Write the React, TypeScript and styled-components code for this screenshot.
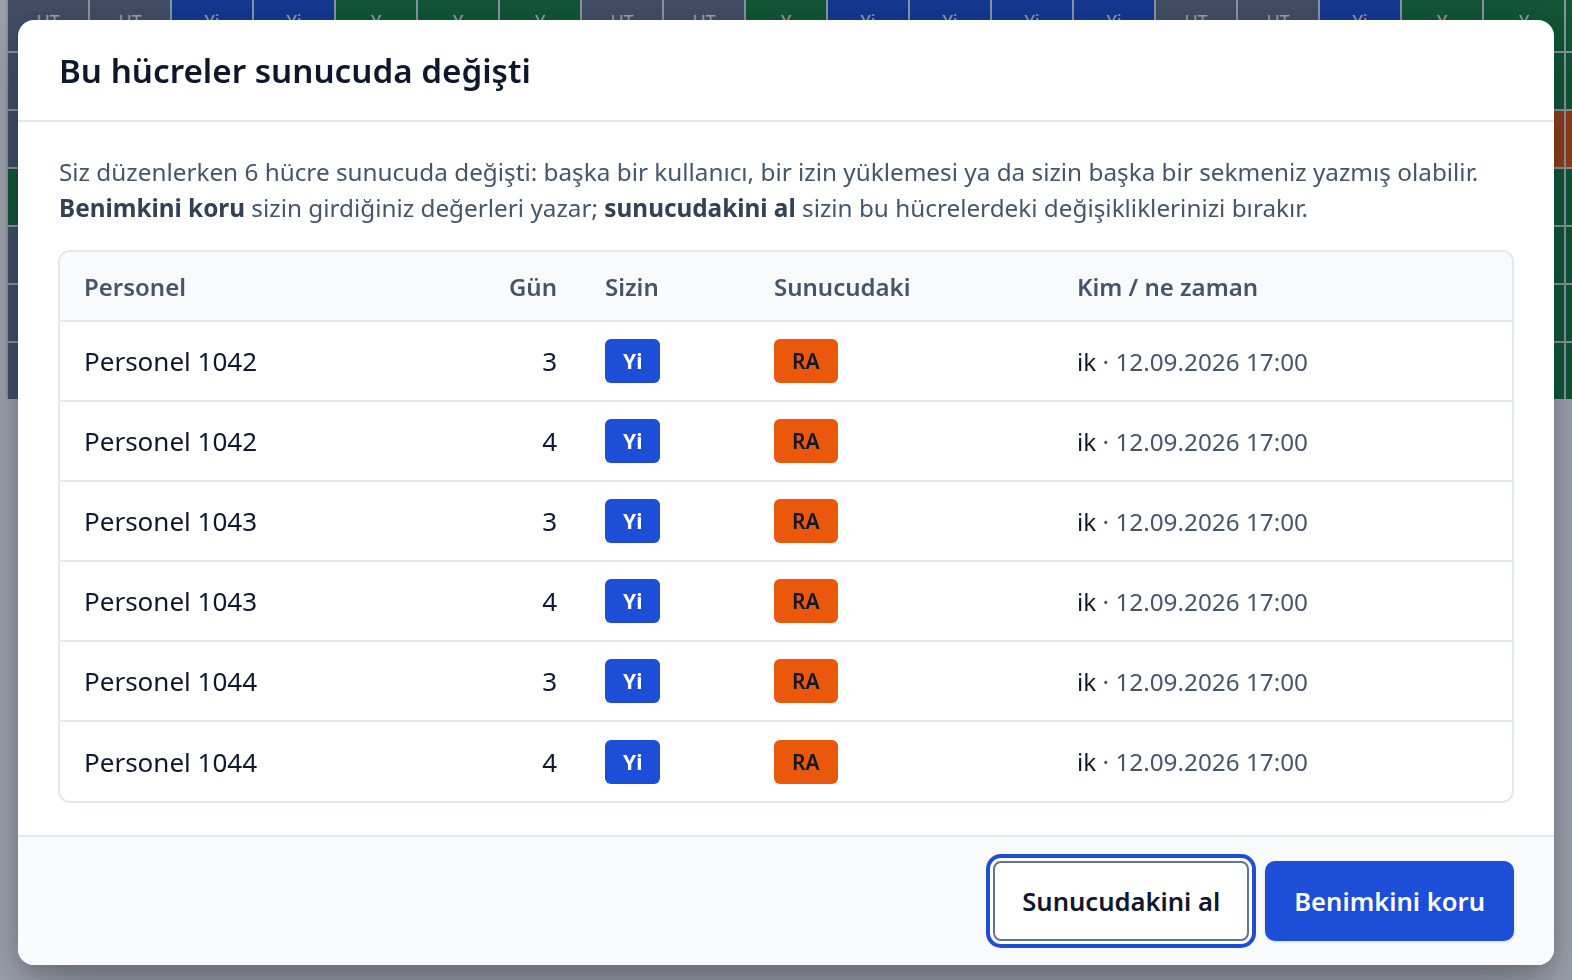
import React from 'react';
import styled, { createGlobalStyle } from 'styled-components';

const GlobalStyle = createGlobalStyle`
  html, body {
    margin: 0;
    padding: 0;
    background: #ffffff;
    overflow: hidden;
  }

  body {
    font-family: "Noto Sans", "Liberation Sans", sans-serif;
    color: #0f172a;
  }

  * {
    box-sizing: border-box;
  }
`;

/* ---------- background schedule grid ---------- */

type Code = 'UT' | 'Yi' | 'Y' | 'RA';

const cellColors: Record<Code, string> = {
  UT: '#64748b',
  Yi: '#1d4ed8',
  Y: '#15803d',
  RA: '#ea580c',
};

const ScheduleGrid = styled.div`
  display: grid;
  grid-template-columns: repeat(20, 80px);
  grid-template-rows: 51px repeat(6, 56px);
  gap: 2px;
  margin-left: 6px;
  padding-left: 2px;
  background: #e2e8f0;
  width: max-content;
`;

const ScheduleCell = styled.div<{ $code: Code; $top?: boolean }>`
  background: ${p => cellColors[p.$code]};
  color: #ffffff;
  font-size: 18px;
  display: flex;
  justify-content: center;
  align-items: ${p => (p.$top ? 'flex-start' : 'center')};
  padding-top: ${p => (p.$top ? '9px' : '0')};
`;

const firstRow: Code[] = [
  'UT', 'UT', 'Yi', 'Yi', 'Y', 'Y', 'Y', 'UT', 'UT', 'Y',
  'Yi', 'Yi', 'Yi', 'Yi', 'UT', 'UT', 'Yi', 'Y', 'Y', 'Y',
];

const otherRows: Code[][] = [
  ['UT', 'Yi', 'Yi', 'Y', 'Y', 'UT', 'UT', 'Yi', 'Yi', 'Y', 'Y', 'Y', 'UT', 'UT', 'Yi', 'Yi', 'Y', 'Y', 'Y', 'Y'],
  ['UT', 'UT', 'Y', 'Y', 'Yi', 'Yi', 'UT', 'UT', 'Y', 'Y', 'Yi', 'Yi', 'UT', 'Y', 'Y', 'Yi', 'Yi', 'UT', 'RA', 'RA'],
  ['Y', 'Y', 'UT', 'UT', 'Yi', 'Yi', 'Y', 'Y', 'UT', 'Yi', 'Yi', 'Y', 'Y', 'UT', 'UT', 'Yi', 'Y', 'Y', 'Y', 'Y'],
  ['UT', 'Yi', 'Yi', 'Y', 'Y', 'UT', 'UT', 'Yi', 'Y', 'Y', 'UT', 'UT', 'Yi', 'Yi', 'Y', 'Y', 'UT', 'Yi', 'Y', 'Y'],
  ['UT', 'UT', 'Yi', 'Yi', 'Y', 'Y', 'UT', 'Y', 'Yi', 'Yi', 'UT', 'Y', 'Y', 'Yi', 'UT', 'UT', 'Y', 'Yi', 'Y', 'Y'],
  ['UT', 'Y', 'Y', 'UT', 'UT', 'Yi', 'Yi', 'Y', 'Y', 'UT', 'Yi', 'Yi', 'Y', 'UT', 'Y', 'Yi', 'Yi', 'UT', 'Y', 'Y'],
];

/* ---------- modal ---------- */

const Overlay = styled.div`
  position: fixed;
  inset: 0;
  background: rgba(15, 23, 42, 0.42);
  display: flex;
  align-items: flex-start;
  justify-content: center;
  padding: 20px 18px;
`;

const Dialog = styled.div`
  width: 100%;
  background: #ffffff;
  border-radius: 16px;
  overflow: hidden;
  box-shadow: 0 25px 50px -12px rgba(15, 23, 42, 0.35), 0 8px 20px rgba(15, 23, 42, 0.15);
  display: flex;
  flex-direction: column;
`;

const Header = styled.header`
  height: 102px;
  padding: 0 41px;
  display: flex;
  align-items: center;
  border-bottom: 2px solid #e2e8f0;
`;

const Title = styled.h2`
  margin: 0;
  font-size: 33.2px;
  font-weight: 600;
  color: #0f172a;
`;

const Body = styled.div`
  padding: 32px 40px;
  display: flex;
  flex-direction: column;
  gap: 24px;
`;

const Description = styled.p`
  margin: 0 1px;
  font-size: 24.3px;
  line-height: 36px;
  color: #475569;

  & strong {
    color: #334155;
    font-weight: 700;
  }
`;

const TableFrame = styled.div`
  border: 2px solid #e2e8f0;
  border-radius: 12px;
  overflow: hidden;
`;

const Table = styled.table`
  width: 100%;
  border-collapse: collapse;
  table-layout: fixed;
`;

const HeadCell = styled.th<{ $align?: 'left' | 'right' }>`
  height: 69px;
  padding: 0 24px;
  background: #f8fafc;
  border-bottom: 2px solid #e2e8f0;
  text-align: ${p => p.$align ?? 'left'};
  font-size: 24px;
  font-weight: 600;
  color: #475569;
`;

const Row = styled.tr`
  &:not(:last-child) td {
    border-bottom: 2px solid #e2e8f0;
  }
`;

const Cell = styled.td<{ $align?: 'left' | 'right' }>`
  height: 80px;
  padding: 0 24px;
  text-align: ${p => p.$align ?? 'left'};
  font-size: 26px;
  color: #0f172a;
  vertical-align: middle;
`;

const WhenCell = styled(Cell)`
  font-size: 24.3px;
  color: #475569;

  & b {
    font-weight: 400;
    color: #0f172a;
  }
`;

const Badge = styled.span<{ $tone: 'mine' | 'server' }>`
  display: inline-flex;
  align-items: center;
  justify-content: center;
  height: 44px;
  padding: 0 18px;
  border-radius: 6px;
  font-size: 21px;
  font-weight: ${p => (p.$tone === 'mine' ? 700 : 600)};
  background: ${p => (p.$tone === 'mine' ? '#1d4ed8' : '#ea580c')};
  color: ${p => (p.$tone === 'mine' ? '#ffffff' : '#0f172a')};
`;

const Footer = styled.footer`
  background: #f8fafc;
  border-top: 2px solid #e2e8f0;
  padding: 24px 40px;
  display: flex;
  justify-content: flex-end;
  gap: 16px;
`;

const Button = styled.button<{ $primary?: boolean }>`
  height: 80px;
  padding: 0 27px;
  border-radius: ${p => (p.$primary ? '10px' : '8px')};
  font-family: inherit;
  font-size: 25.6px;
  font-weight: 600;
  cursor: pointer;
  border: 2px solid ${p => (p.$primary ? '#1d4ed8' : '#64748b')};
  background: ${p => (p.$primary ? '#1d4ed8' : '#ffffff')};
  color: ${p => (p.$primary ? '#ffffff' : '#0f172a')};
  box-shadow: ${p =>
    p.$primary
      ? '0 1px 3px rgba(15, 23, 42, 0.15)'
      : '0 0 0 3px #ffffff, 0 0 0 7px #1d4ed8'};
`;

const conflicts = [
  { name: 'Personel 1042', day: 3 },
  { name: 'Personel 1042', day: 4 },
  { name: 'Personel 1043', day: 3 },
  { name: 'Personel 1043', day: 4 },
  { name: 'Personel 1044', day: 3 },
  { name: 'Personel 1044', day: 4 },
];

export default function App() {
  return (
    <>
      <GlobalStyle />
      <ScheduleGrid>
        {firstRow.map((c, i) => (
          <ScheduleCell key={`f${i}`} $code={c} $top>
            {c}
          </ScheduleCell>
        ))}
        {otherRows.map((row, r) =>
          row.map((c, i) => (
            <ScheduleCell key={`${r}-${i}`} $code={c}>
              {c}
            </ScheduleCell>
          ))
        )}
      </ScheduleGrid>

      <Overlay>
        <Dialog role="dialog" aria-modal="true">
          <Header>
            <Title>Bu hücreler sunucuda değişti</Title>
          </Header>
          <Body>
            <Description>
              Siz düzenlerken 6 hücre sunucuda değişti: başka bir kullanıcı, bir izin yüklemesi ya da sizin başka bir sekmeniz yazmış olabilir.{' '}
              <strong>Benimkini koru</strong> sizin girdiğiniz değerleri yazar; <strong>sunucudakini al</strong> sizin bu hücrelerdeki değişikliklerinizi bırakır.
            </Description>
            <TableFrame>
              <Table>
                <colgroup>
                  <col style={{ width: 422 }} />
                  <col style={{ width: 99 }} />
                  <col style={{ width: 169 }} />
                  <col style={{ width: 303 }} />
                  <col />
                </colgroup>
                <thead>
                  <tr>
                    <HeadCell>Personel</HeadCell>
                    <HeadCell $align="right">Gün</HeadCell>
                    <HeadCell>Sizin</HeadCell>
                    <HeadCell>Sunucudaki</HeadCell>
                    <HeadCell>Kim / ne zaman</HeadCell>
                  </tr>
                </thead>
                <tbody>
                  {conflicts.map((c, i) => (
                    <Row key={i}>
                      <Cell>{c.name}</Cell>
                      <Cell $align="right">{c.day}</Cell>
                      <Cell>
                        <Badge $tone="mine">Yi</Badge>
                      </Cell>
                      <Cell>
                        <Badge $tone="server">RA</Badge>
                      </Cell>
                      <WhenCell>
                        <b>ik</b> · 12.09.2026 17:00
                      </WhenCell>
                    </Row>
                  ))}
                </tbody>
              </Table>
            </TableFrame>
          </Body>
          <Footer>
            <Button>Sunucudakini al</Button>
            <Button $primary>Benimkini koru</Button>
          </Footer>
        </Dialog>
      </Overlay>
    </>
  );
}
